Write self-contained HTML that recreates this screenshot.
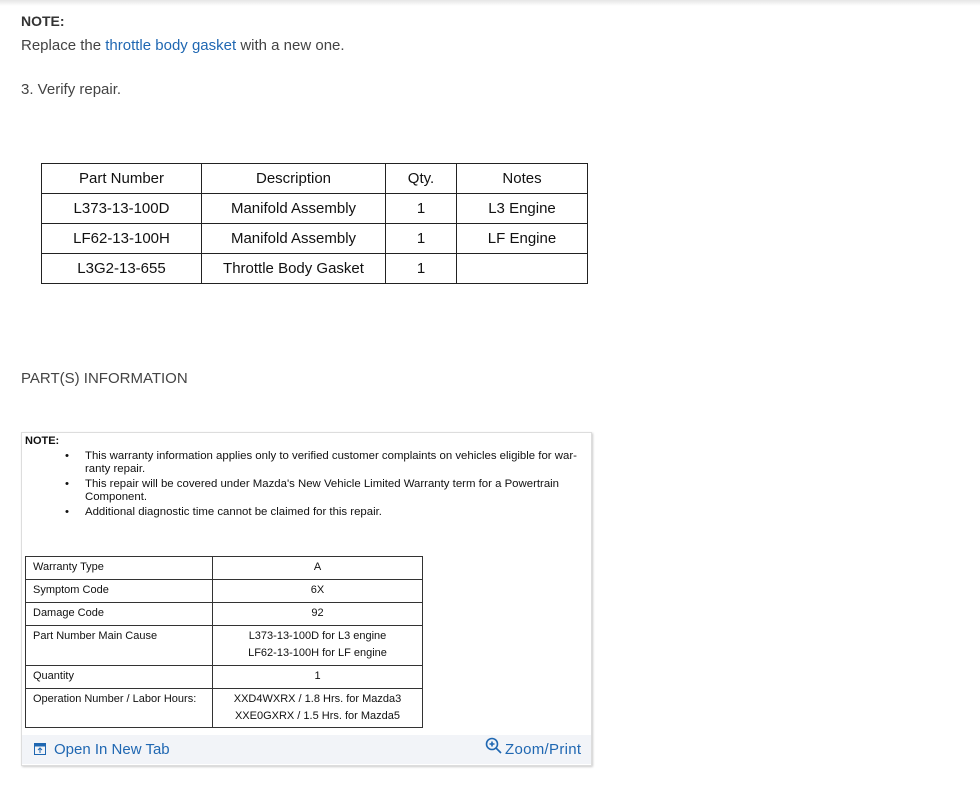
<!DOCTYPE html><html><head><style>
body{margin:0;width:980px;height:803px;background:#fff;position:relative;font-family:"Liberation Sans",Arial,sans-serif;overflow:hidden}
.a{position:absolute}
.sh{left:0;top:0;width:980px;height:6px;background:linear-gradient(#e6e6e6,#fff)}
table{border-collapse:collapse;position:absolute}
.p td{border:1px solid #222;font-size:15px;color:#111;text-align:center;height:29px;padding:0}
.w td{border:1px solid #333;font-size:11px;color:#111;padding:0 7px;vertical-align:top;line-height:17px;padding-top:2px}
.w td.c{text-align:center}
</style></head><body>
<div class="a sh"></div>
<div class="a" style="left:21px;top:13px;font-size:14px;font-weight:bold;color:#333">NOTE:</div>
<div class="a" style="left:21px;top:37px;font-size:15px;color:#444">Replace the <span style="color:#1f67b2">throttle body gasket</span> with a new one.</div>
<div class="a" style="left:21px;top:81px;font-size:15px;color:#444">3. Verify repair.</div>
<table class="p" style="left:41px;top:163px;width:547px">
<tr><td style="width:159px">Part Number</td><td style="width:183px">Description</td><td style="width:70px">Qty.</td><td>Notes</td></tr>
<tr><td>L373-13-100D</td><td>Manifold Assembly</td><td>1</td><td>L3 Engine</td></tr>
<tr><td>LF62-13-100H</td><td>Manifold Assembly</td><td>1</td><td>LF Engine</td></tr>
<tr><td>L3G2-13-655</td><td>Throttle Body Gasket</td><td>1</td><td></td></tr>
</table>
<div class="a" style="left:21px;top:370px;font-size:15px;color:#444">PART(S) INFORMATION</div>
<div class="a" style="left:21px;top:432px;width:569px;height:332px;border:1px solid #ddd;box-shadow:1px 1px 2px #ccc;background:#fff"></div>
<div class="a" style="left:25px;top:435px;font-size:11px;font-weight:bold;color:#111">NOTE:</div>
<div class="a" style="left:85px;top:450px;width:505px;font-size:11.4px;line-height:13px;color:#111">
<div style="position:relative">This warranty information applies only to verified customer complaints on vehicles eligible for war-<br>ranty repair.<span style="position:absolute;left:-20px;top:0">•</span></div>
<div style="position:relative;margin-top:2px">This repair will be covered under Mazda's New Vehicle Limited Warranty term for a Powertrain<br>Component.<span style="position:absolute;left:-20px;top:0">•</span></div>
<div style="position:relative;margin-top:2px">Additional diagnostic time cannot be claimed for this repair.<span style="position:absolute;left:-20px;top:0">•</span></div>
</div>
<table class="w" style="left:25px;top:556px;width:398px">
<tr style="height:23px"><td style="width:172px">Warranty Type</td><td class="c">A</td></tr>
<tr style="height:23px"><td>Symptom Code</td><td class="c">6X</td></tr>
<tr style="height:23px"><td>Damage Code</td><td class="c">92</td></tr>
<tr style="height:40px"><td>Part Number Main Cause</td><td class="c">L373-13-100D for L3 engine<br>LF62-13-100H for LF engine</td></tr>
<tr style="height:23px"><td>Quantity</td><td class="c">1</td></tr>
<tr style="height:39px"><td>Operation Number / Labor Hours:</td><td class="c">XXD4WXRX / 1.8 Hrs. for Mazda3<br>XXE0GXRX / 1.5 Hrs. for Mazda5</td></tr>
</table>
<div class="a" style="left:22px;top:735px;width:569px;height:29px;background:#f2f4f8"></div>
<svg class="a" style="left:34px;top:743px" width="12" height="12" viewBox="0 0 12 12"><rect x="0.5" y="0.5" width="11" height="11" fill="none" stroke="#1f67b2"/><rect x="0.5" y="0.5" width="11" height="3" fill="#1f67b2"/><path d="M6 10V5M4 7l2-2 2 2" stroke="#1f67b2" fill="none"/></svg>
<div class="a" style="left:54px;top:741px;font-size:15px;color:#1f67b2">Open In New Tab</div>
<svg class="a" style="left:485px;top:737px" width="18" height="18" viewBox="0 0 18 18"><circle cx="7" cy="7" r="5.5" fill="none" stroke="#1f67b2" stroke-width="1.6"/><path d="M11 11l5 5M7 4.5v5M4.5 7h5" stroke="#1f67b2" stroke-width="1.6"/></svg>
<div class="a" style="left:505px;top:741px;font-size:15px;color:#1f67b2;letter-spacing:0.3px">Zoom/Print</div>
</body></html>
